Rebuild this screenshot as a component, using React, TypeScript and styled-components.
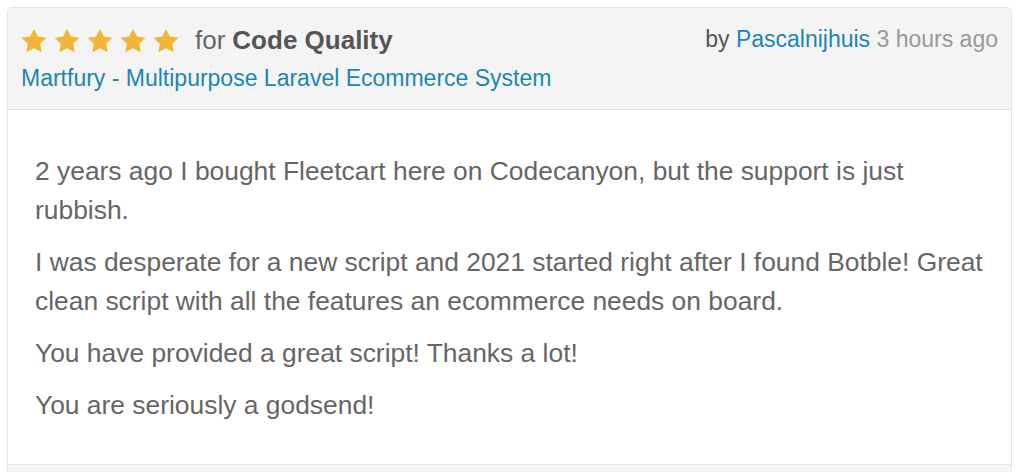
import React from "react";
import styled, { createGlobalStyle } from "styled-components";

const Global = createGlobalStyle`
  html, body { margin: 0; padding: 0; background: #ffffff; }
  body { font-family: "Liberation Sans", Arial, Helvetica, sans-serif; overflow: hidden; }
  * { box-sizing: border-box; }
`;

const Card = styled.article`
  margin: 7px 12px 0 7px;
  border: 1px solid #e2e5e9;
  border-bottom: none;
  border-radius: 5px 5px 0 0;
  background: #ffffff;
`;

const Header = styled.header`
  display: flex;
  justify-content: space-between;
  align-items: flex-start;
  padding: 14px 13px 16px 13px;
  background: #f4f4f4;
  border-bottom: 1px solid #e2e5e9;
  border-radius: 5px 5px 0 0;
`;

const TitleCol = styled.div`
  display: flex;
  flex-direction: column;
  gap: 5px;
`;

const RatingRow = styled.div`
  display: flex;
  align-items: center;
  height: 36px;
  line-height: 36px;
  font-size: 26px;
  color: #666666;
`;

const Stars = styled.div`
  display: flex;
  gap: 7px;
  margin-right: 16px;
`;

const Strong = styled.strong`
  color: #555555;
  font-weight: 700;
  margin-left: 7px;
`;

const Link = styled.a<{ $size: number }>`
  color: #1b87b2;
  text-decoration: none;
  font-size: ${(p) => p.$size}px;
`;

const ItemLine = styled.div`
  line-height: 30px;
  font-size: 23px;
`;

const Meta = styled.div`
  font-size: 23px;
  line-height: 34px;
  color: #555555;
  white-space: nowrap;
`;

const Time = styled.span`
  color: #999999;
`;

const Body = styled.div`
  padding: 42px 20px 26px 27px;
  color: #666666;
  font-size: 26.4px;
  line-height: 39px;
`;

const P = styled.p`
  margin: 0 0 13px 0;
`;

const Footer = styled.div`
  height: 8px;
  background: #f4f4f4;
  border-top: 1px solid #e2e5e9;
`;

const Star = () => (
  <svg width="26" height="25" viewBox="0 0 24 23" aria-hidden="true">
    <path
      d="M12 0.6l3.5 7.2 7.9 1.1-5.7 5.5 1.4 7.9L12 18.6l-7.1 3.7 1.4-7.9L0.6 8.9l7.9-1.1z"
      fill="#f2b535"
    />
  </svg>
);

export default function App() {
  return (
    <>
      <Global />
      <Card>
        <Header>
          <TitleCol>
            <RatingRow>
              <Stars>
                {[0, 1, 2, 3, 4].map((i) => (
                  <Star key={i} />
                ))}
              </Stars>
              for<Strong>Code Quality</Strong>
            </RatingRow>
            <ItemLine>
              <Link $size={23} href="#">
                Martfury - Multipurpose Laravel Ecommerce System
              </Link>
            </ItemLine>
          </TitleCol>
          <Meta>
            by <Link $size={23} href="#">Pascalnijhuis</Link> <Time>3 hours ago</Time>
          </Meta>
        </Header>
        <Body>
          <P>
            2 years ago I bought Fleetcart here on Codecanyon, but the support is just
            rubbish.
          </P>
          <P>
            I was desperate for a new script and 2021 started right after I found Botble! Great
            clean script with all the features an ecommerce needs on board.
          </P>
          <P>You have provided a great script! Thanks a lot!</P>
          <P>You are seriously a godsend!</P>
        </Body>
        <Footer />
      </Card>
    </>
  );
}
